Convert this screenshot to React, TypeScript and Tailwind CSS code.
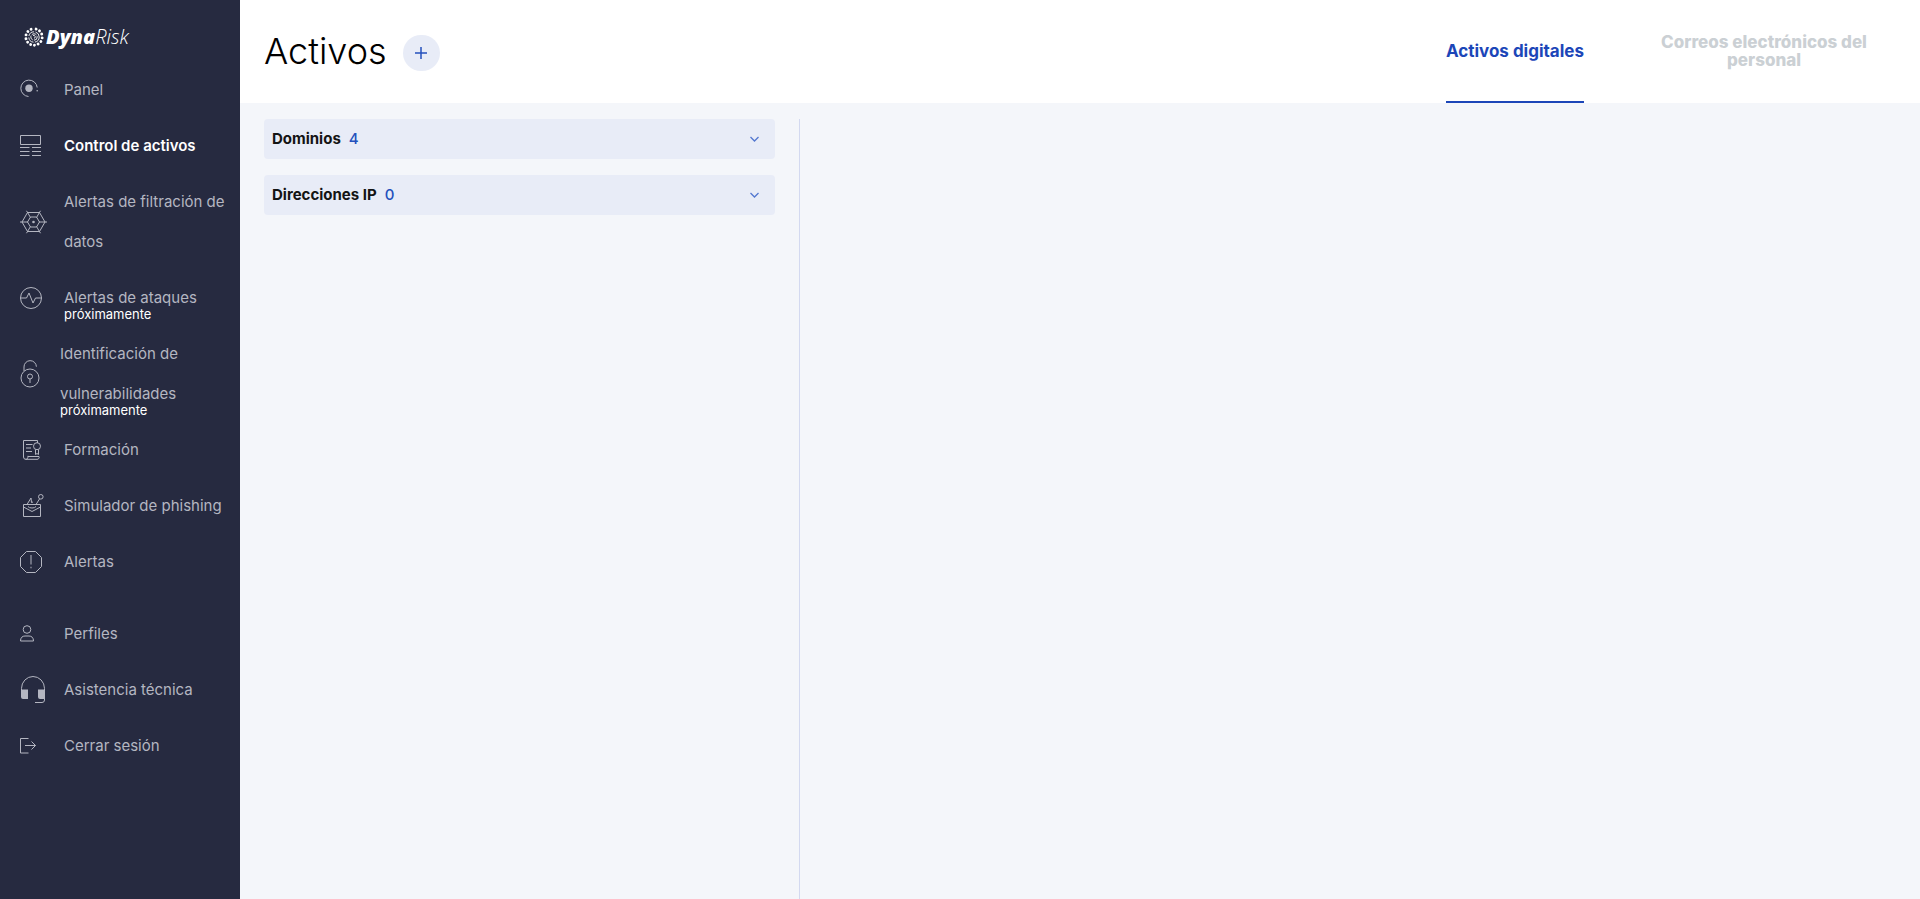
import { useState } from 'react';
import type { ReactNode } from 'react';

interface NavItem {
  label: string;
  icon: ReactNode;
  soon?: boolean;
  narrow?: boolean;
}

const PanelIcon = () => (
  <svg width="18" height="22" viewBox="0 0 18 22" fill="none" stroke="currentColor">
    <path d="M8.500 17.500A8.200 8.200 0 1 1 17.200 8.500" />
    <circle cx="9" cy="9.200" r="3.700" fill="currentColor" stroke="none" />
    <circle cx="17.200" cy="11.800" r=".8" fill="currentColor" stroke="none" />
  </svg>
);

const AssetsIcon = () => (
  <svg width="22" height="22" viewBox="0 0 22 22" fill="none" stroke="currentColor">
    <path d="M.5.5h20v9H.5zM0 12.500h9.500M12 12.500h9M0 16.500h9.500M12 16.500h9M0 20.500h9.500M12 20.500h9" />
  </svg>
);

const WebIcon = () => (
  <svg width="27" height="24" viewBox="0 0 27 24" fill="none" stroke="currentColor">
    <path d="M7.500 2.500h12l5.500 9.500-5.500 9.500h-12L2 12zM10.500 7h6l3 5-3 5h-6l-3-5z" />
    <path d="M0 12h8M19 12h8M6.500 .8l4 6.700M20.500 .8l-4 6.700M6.500 23.200l4-6.700M20.500 23.200l-4-6.700" />
    <circle cx="13.500" cy="12" r="1.300" fill="currentColor" stroke="none" />
  </svg>
);

const AttackIcon = () => (
  <svg width="22" height="22" viewBox="0 0 22 22" fill="none" stroke="currentColor">
    <circle cx="11" cy="11" r="10.500" />
    <path d="M.5 11h6l2.500-5 4 10 2.500-5h6" />
  </svg>
);

const LockIcon = () => (
  <svg width="20" height="28" viewBox="0 0 20 28" fill="none" stroke="currentColor">
    <circle cx="10" cy="18" r="9" />
    <path d="M4 11V7a6.200 6.200 0 0 1 12.400-.3" />
    <circle cx="10" cy="16.500" r="2.500" />
    <path d="M10 19v4" />
  </svg>
);

const TrainingIcon = () => (
  <svg width="22" height="20" viewBox="0 0 22 20" fill="none" stroke="currentColor">
    <path d="M17.500 3V.5h-14v16.500a2.300 2.300 0 0 0 2.300 2.300H17a2 2 0 0 0 2-2.800H8" />
    <path d="M5.500 19.300c2 0 2.500-1 2.500-3.500" />
    <path d="M6 4.500h6.500M6 8h5M6 11.500h6" />
    <circle cx="17" cy="6.200" r="3.500" />
    <path d="M15.500 9.500v5l1.500-1 1.500 1v-5" />
  </svg>
);

const PhishingIcon = () => (
  <svg width="24" height="24" viewBox="0 0 24 24" fill="none" stroke="currentColor">
    <path d="M3.500 10.500h17v12h-17z" />
    <path d="M3.500 13l8.500 4.500 8.500-4.500M8 12.500c1 2 7 2 8 0" />
    <path d="M7 10.500l4-6.500.5 4.500 1.500-.5M16 10.500l3.500-5.500" />
    <circle cx="20.800" cy="2.800" r="2.300" />
  </svg>
);

const AlertIcon = () => (
  <svg width="22" height="22" viewBox="0 0 22 22" fill="none" stroke="currentColor">
    <path d="M6.500.5h9l6 6v9l-6 6h-9l-6-6v-9z" />
    <path d="M11 4v9.500" />
    <path d="M10.500 16.500h1" strokeWidth="1.500" />
  </svg>
);

const ProfileIcon = () => (
  <svg width="14" height="18" viewBox="0 0 14 18" fill="none" stroke="currentColor">
    <circle cx="7" cy="4.500" r="3.800" />
    <path d="M.5 16c0-3.500 2-5 4.500-5h4c2.500 0 4.500 1.500 4.500 5z" />
  </svg>
);

const SupportIcon = () => (
  <svg width="26" height="28" viewBox="0 0 26 28" fill="none" stroke="currentColor">
    <path d="M1.500 14v-1.500a11.500 12 0 0 1 23 0V24a2.500 2.500 0 0 1-2.500 2.500h-7" />
    <path d="M1 13.500h7v9.500H3a2 2 0 0 1-2-2zM18 13.500h6.500v9.500H20a2 2 0 0 1-2-2z" fill="currentColor" stroke="none" />
  </svg>
);

const LogoutIcon = () => (
  <svg width="16" height="16" viewBox="0 0 16 16" fill="none" stroke="currentColor">
    <path d="M8.500.5h-8v14.500h8M5 7.500h10.500M11.500 3.500l4 4-4 4" />
  </svg>
);

const logoDots = [15, 42, 69, 96, 123, 150, 177, 204, 231, 258, 285, 312, 339];

const LogoMark = () => (
  <svg width="20" height="20" viewBox="0 0 20 20" fill="none" stroke="white">
    {logoDots.map((angle) => (
      <circle key={angle} cx="10" cy="1.800" r="1.450" fill="white" stroke="none" transform={`rotate(${angle} 10 10)`} />
    ))}
    <circle cx="10" cy="10" r="5.200" strokeWidth=".9" strokeDasharray="7 1.500" />
    <circle cx="10" cy="10" r="3.200" strokeWidth=".9" strokeDasharray="5 1.200" />
    <path d="M9 8.500a1.500 1.500 0 1 1 1 2.800" strokeWidth=".9" />
  </svg>
);

const mainItems: NavItem[] = [
  { label: 'Panel', icon: <PanelIcon /> },
  { label: 'Control de activos', icon: <AssetsIcon /> },
  { label: 'Alertas de filtración de datos', icon: <WebIcon /> },
  { label: 'Alertas de ataques', icon: <AttackIcon />, soon: true },
  { label: 'Identificación de vulnerabilidades', icon: <LockIcon />, soon: true, narrow: true },
  { label: 'Formación', icon: <TrainingIcon /> },
  { label: 'Simulador de phishing', icon: <PhishingIcon /> },
  { label: 'Alertas', icon: <AlertIcon /> },
];

const accountItems: NavItem[] = [
  { label: 'Perfiles', icon: <ProfileIcon /> },
  { label: 'Asistencia técnica', icon: <SupportIcon /> },
  { label: 'Cerrar sesión', icon: <LogoutIcon /> },
];

const assetGroups = [
  { name: 'Dominios', count: 4 },
  { name: 'Direcciones IP', count: 0 },
];

const tabs = ['Activos digitales', 'Correos electrónicos del personal'];

function NavList({ items, current }: { items: NavItem[]; current?: string }) {
  return (
    <ul className="flex flex-col gap-4">
      {items.map((item) => (
        <li key={item.label}>
          <a
            href="#"
            aria-current={item.label === current ? 'page' : undefined}
            className="flex items-center pl-5 pr-3"
          >
            <span className={`shrink-0 text-[#b4b6c1] ${item.narrow ? 'w-10' : 'w-11'}`}>
              {item.icon}
            </span>
            <span className="flex flex-col">
              <span
                className={`text-[15px] leading-10 ${
                  item.label === current ? 'font-semibold text-white' : 'text-[#b4b6c1]'
                }`}
              >
                {item.label}
              </span>
              {item.soon && (
                <span className="-mt-3 -mb-1 text-[13px] leading-4 text-white">próximamente</span>
              )}
            </span>
          </a>
        </li>
      ))}
    </ul>
  );
}

export default function App() {
  const [activeTab, setActiveTab] = useState(tabs[0]);

  return (
    <div className="flex min-h-screen bg-[#f4f6fa] font-['Inter',sans-serif] text-[#141414]">
      {/* Sidebar */}
      <aside className="w-60 shrink-0 bg-[#262a40]">
        <a href="#" className="flex h-[70px] items-center gap-[2px] pl-6 pb-2 pt-3 text-white">
          <LogoMark />
          <span className="font-['Open_Sans',sans-serif] text-xl leading-6 italic">
            <span className="font-extrabold">Dyna</span>
            <span className="font-light">Risk</span>
          </span>
        </a>
        <nav className="flex flex-col gap-8">
          <NavList items={mainItems} current="Control de activos" />
          <NavList items={accountItems} />
        </nav>
      </aside>

      <main className="flex min-w-0 flex-1 flex-col">
        {/* Header */}
        <header className="flex h-[103px] items-stretch justify-between bg-white pl-6 pr-9">
          <div className="flex items-center gap-4 pb-[2px]">
            <h1 className="text-4xl font-light text-black">Activos</h1>
            <button
              aria-label="Añadir activo"
              className="mt-1 flex h-9 w-[37px] items-center justify-center rounded-full bg-[#e8ecf7] text-[#2450bd]"
            >
              <svg width="12" height="12" viewBox="0 0 12 12" stroke="currentColor" strokeWidth="1.500">
                <path d="M6 0v12M0 6h12" />
              </svg>
            </button>
          </div>
          <div role="tablist" className="flex gap-[60px]">
            {tabs.map((tab) => (
              <button
                key={tab}
                role="tab"
                aria-selected={tab === activeTab}
                onClick={() => setActiveTab(tab)}
                className={`max-w-60 border-b-2 text-center text-[17px] leading-[18px] ${
                  tab === activeTab
                    ? 'border-[#1c46b8] font-bold text-[#1c46b8]'
                    : 'border-transparent font-extrabold text-[#cbd0d4]'
                }`}
              >
                {tab}
              </button>
            ))}
          </div>
        </header>

        {/* Asset groups */}
        <div className="flex flex-1 pt-4">
          <section className="flex w-1/3 flex-col gap-4 border-r border-[#d3d9f0] px-6">
            {assetGroups.map((group) => (
              <button
                key={group.name}
                aria-expanded={false}
                className="flex h-10 items-center gap-2 rounded bg-[#e8ecf7] pl-2 pr-4 text-[15px]"
              >
                <span className="font-bold">{group.name}</span>
                <span className="font-medium text-[#2450bd]">{group.count}</span>
                <svg className="ml-auto text-[#5377d0]" width="9" height="6" viewBox="0 0 9 6" fill="none" stroke="currentColor" strokeWidth="1.300">
                  <path d="M.5 1l4 4 4-4" />
                </svg>
              </button>
            ))}
          </section>
          <section className="flex-1" />
        </div>
      </main>
    </div>
  );
}
